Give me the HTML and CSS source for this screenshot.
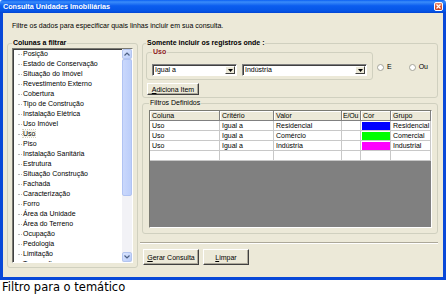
FILE: index.html
```html
<!DOCTYPE html>
<html lang="pt">
<head>
<meta charset="utf-8">
<title>Consulta Unidades Imobiliárias</title>
<link rel="stylesheet" href="styles.css">
</head>
<body>
<div class="window">
  <div class="titlebar">
    <span class="title">Consulta Unidades Imobiliárias</span>
    <span class="close"><svg width="5" height="5" viewBox="0 0 5 5"><path d="M0.5 0.5L4.5 4.5M4.5 0.5L0.5 4.5" stroke="#fff" stroke-width="1.2"/></svg></span>
  </div>
  <div class="client">
    <p class="desc">Filtre os dados para especificar quais linhas incluir em sua consulta.</p>
    <div class="main">
      <fieldset class="group cols">
        <legend class="bold">Colunas a filtrar</legend>
        <div class="listbox">
          <ul class="items">
            <li>Posição</li>
            <li>Estado de Conservação</li>
            <li>Situação do Imóvel</li>
            <li>Revestimento Externo</li>
            <li>Cobertura</li>
            <li>Tipo de Construção</li>
            <li>Instalação Elétrica</li>
            <li>Uso Imóvel</li>
            <li class="focus"><span>Uso</span></li>
            <li>Piso</li>
            <li>Instalação Sanitária</li>
            <li>Estrutura</li>
            <li>Situação Construção</li>
            <li>Fachada</li>
            <li>Caracterização</li>
            <li>Forro</li>
            <li>Área da Unidade</li>
            <li>Área do Terreno</li>
            <li>Ocupação</li>
            <li>Pedologia</li>
            <li>Limitação</li>
            <li class="partial">Topografia</li>
          </ul>
          <div class="vscroll">
            <div class="sb-btn"><svg width="6" height="4" viewBox="0 0 6 4"><path d="M0.5 3.5L3 1L5.5 3.5" fill="none" stroke="#4D6185" stroke-width="1.2"/></svg></div>
            <div class="sb-thumb"></div>
            <div class="sb-track"></div>
            <div class="sb-btn"><svg width="6" height="4" viewBox="0 0 6 4"><path d="M0.5 0.5L3 3L5.5 0.5" fill="none" stroke="#4D6185" stroke-width="1.2"/></svg></div>
          </div>
        </div>
      </fieldset>
      <div class="right">
        <fieldset class="group somente">
          <legend class="bold">Somente incluir os registros onde :</legend>
          <div class="cond-row">
            <fieldset class="group uso">
              <legend class="bold red">Uso</legend>
              <div class="combos">
                <div class="combo c1"><span class="val">Igual a</span><span class="drop"><svg width="5" height="3" viewBox="0 0 5 3"><path d="M0 0H5L2.5 3Z" fill="#000"/></svg></span></div>
                <div class="combo c2"><span class="val">Indústria</span><span class="drop"><svg width="5" height="3" viewBox="0 0 5 3"><path d="M0 0H5L2.5 3Z" fill="#000"/></svg></span></div>
              </div>
            </fieldset>
            <div class="radio r1"><span class="dot"></span>E</div>
            <div class="radio r2"><span class="dot"></span>Ou</div>
          </div>
          <button class="btn add"><u>A</u>diciona Item</button>
        </fieldset>
        <fieldset class="group filtros">
          <legend>Filtros Definidos</legend>
          <div class="grid">
            <div class="hd">Coluna</div><div class="hd">Critério</div><div class="hd">Valor</div><div class="hd tight">E/Ou</div><div class="hd">Cor</div><div class="hd">Grupo</div>
            <div class="cell">Uso</div><div class="cell">Igual a</div><div class="cell">Residencial</div><div class="cell"></div><div class="cell sw"><span class="swatch blue"></span></div><div class="cell">Residencial</div>
            <div class="cell">Uso</div><div class="cell">Igual a</div><div class="cell">Comércio</div><div class="cell"></div><div class="cell sw"><span class="swatch green"></span></div><div class="cell">Comercial</div>
            <div class="cell">Uso</div><div class="cell">Igual a</div><div class="cell">Indústria</div><div class="cell"></div><div class="cell sw"><span class="swatch magenta"></span></div><div class="cell">Industrial</div>
            <div class="cell"></div><div class="cell"></div><div class="cell"></div><div class="cell"></div><div class="cell"></div><div class="cell"></div>
          </div>
        </fieldset>
        <div class="sep"></div>
        <div class="actions">
          <button class="btn big gerar"><u>G</u>erar Consulta</button>
          <button class="btn big limpar"><u>L</u>impar</button>
        </div>
      </div>
    </div>
  </div>
</div>
<p class="caption">Filtro para o temático</p>
</body>
</html>
```
FILE: styles.css
```css
* { box-sizing: border-box; }

body {
  margin: 0;
  background: #fff;
  font-family: "Liberation Sans", Arial, sans-serif;
  font-size: 7px;
  color: #000;
}

.window { width: 446px; }

.titlebar {
  height: 13px;
  background: linear-gradient(#0A5FF2, #3A8CFA 15%, #0B5DEF 45%, #0555E6 85%, #0344D2);
  display: flex;
  align-items: center;
  justify-content: space-between;
  padding: 0 3px 0 3px;
  border-radius: 3px 3px 0 0;
}

.title {
  color: #fff;
  font-weight: bold;
  font-size: 7.2px;
  line-height: 13px;
}

.close {
  width: 9px;
  height: 9px;
  border: 1px solid #fff;
  border-radius: 2px;
  background: linear-gradient(#E98A6E, #D9512F 60%, #C7401E);
  display: flex;
  align-items: center;
  justify-content: center;
}

.client {
  height: 267px;
  background: #ECE9D8;
  border: 3px solid #0848D8;
  border-top: 0;
  padding: 8px 0 0 4px;
}

.desc {
  margin: 0 0 0 5px;
  line-height: 10px;
}

.main {
  display: flex;
  gap: 4px;
  margin-top: 7px;
  align-items: flex-start;
}

fieldset.group {
  margin: 0;
  min-inline-size: 0;
  border: 1px solid #D0D0BF;
  border-radius: 3px;
}

legend {
  padding: 0 1px;
  line-height: 10px;
  font-size: 7px;
}

.bold { font-weight: bold; }
.red { color: #8E1B1F; }

/* left column */
.cols {
  width: 131px;
  padding: 0 4px 4px 4px;
}

.listbox {
  height: 215px;
  display: flex;
  background: #fff;
  border: 1px solid;
  border-color: #7A7A72 #FFFFFF #FFFFFF #7A7A72;
  box-shadow: inset 1px 1px 0 #404040;
}

.items {
  flex: 1;
  margin: 0;
  padding: 0;
  list-style: none;
  overflow: hidden;
}

.items li {
  position: relative;
  height: 10px;
  line-height: 10px;
  padding-left: 10px;
  white-space: nowrap;
}

.items li.partial { height: 5px; overflow: hidden; }

.items li::before {
  content: "";
  position: absolute;
  left: 5px;
  top: 5px;
  width: 4px;
  border-top: 1px dotted #BDBDBD;
}

.items li.focus span {
  background: #F6F4EC;
  outline: 1px dotted #D4D0BE;
}

.vscroll {
  width: 10px;
  display: flex;
  flex-direction: column;
  background: #F1F0EA;
}

.sb-btn {
  height: 10px;
  background: linear-gradient(135deg, #DCE6FE, #B9CCF9);
  border: 1px solid #B3C5F0;
  border-radius: 2px;
  display: flex;
  align-items: center;
  justify-content: center;
}

.sb-thumb {
  height: 137px;
  background: linear-gradient(90deg, #CAD8FC, #BCCEFA);
  border: 1px solid #B0C3F3;
  border-radius: 2px;
}

.sb-track {
  flex: 1;
  background: #F2F2F6;
}

/* right column */
.right {
  width: 296px;
  display: flex;
  flex-direction: column;
}

.somente {
  padding: 0 3px 2px 3px;
}

.cond-row {
  display: flex;
  align-items: flex-start;
  margin-top: -1px;
}

.uso {
  width: 227px;
  padding: 0 5px 3px 5px;
}

.combos {
  display: flex;
  gap: 5px;
  margin-top: 7px;
}

.combo {
  height: 12px;
  display: flex;
  background: #fff;
  border: 1px solid;
  border-color: #808080 #FFFFFF #FFFFFF #808080;
  box-shadow: inset 1px 1px 0 #404040;
}

.c1 { width: 85px; }
.c2 { width: 125px; }

.combo .val {
  flex: 1;
  line-height: 10px;
  padding-left: 2px;
}

.drop {
  width: 10px;
  margin: 1px 1px 1px 0;
  background: #ECE9D8;
  border: 1px solid;
  border-color: #FFFFFF #404040 #404040 #FFFFFF;
  display: flex;
  align-items: center;
  justify-content: center;
}

.radio {
  display: flex;
  align-items: center;
  gap: 3px;
  margin-top: 15px;
  line-height: 10px;
}

.r1 { margin-left: 4px; }
.r2 { margin-left: 17px; }

.dot {
  width: 7px;
  height: 7px;
  border-radius: 50%;
  background: #fff;
  border: 1px solid #A4A49A;
}

.btn {
  display: block;
  margin: 0;
  padding: 0;
  font-family: inherit;
  font-size: 7px;
  color: #000;
  background: #ECE9D8;
  border: 1px solid;
  border-color: #FFFFFF #404040 #404040 #FFFFFF;
  box-shadow: inset -1px -1px 0 #ACA899;
  line-height: 9px;
}

.add {
  width: 52px;
  height: 12px;
  margin: 3px 0 0 1px;
}

.filtros {
  margin-top: 4px;
  padding: 2px 5px 5px 6px;
}

.grid {
  height: 118px;
  display: grid;
  grid-template-columns: 70px 54px 68px 19px 30px 40px;
  grid-auto-rows: 10px;
  align-content: start;
  background: #808080;
  border: 1px solid;
  border-color: #7A7A72 #FFFFFF #FFFFFF #7A7A72;
}

.hd {
  background: #ECE9D8;
  border-right: 1px solid #808080;
  border-bottom: 1px solid #808080;
  box-shadow: inset 1px 1px 0 #fff;
  line-height: 9px;
  padding-left: 2px;
  white-space: nowrap;
  overflow: hidden;
}

.hd.tight { padding-left: 1px; letter-spacing: -0.2px; }

.cell {
  background: #fff;
  border-right: 1px solid #C8C8C8;
  border-bottom: 1px solid #C8C8C8;
  line-height: 9px;
  padding-left: 2px;
  white-space: nowrap;
  overflow: hidden;
}

.cell.sw { padding: 1px 0 0 1px; }

.swatch {
  display: block;
  height: 8px;
  width: 28px;
}
.blue { background: #0000FF; }
.green { background: #00FF00; }
.magenta { background: #FF00FF; }

.sep {
  margin: 8px 0 0 -2px;
  height: 2px;
  border-top: 1px solid #ACA899;
  border-bottom: 1px solid #fff;
}

.actions {
  display: flex;
  gap: 4px;
  margin: 5px 0 0 1px;
}

.big { height: 16px; }
.gerar { width: 56px; }
.limpar { width: 46px; }

.caption {
  margin: 0;
  padding-left: 2px;
  font-family: "DejaVu Sans", Verdana, sans-serif;
  font-size: 11.5px;
  line-height: 15px;
}
```
